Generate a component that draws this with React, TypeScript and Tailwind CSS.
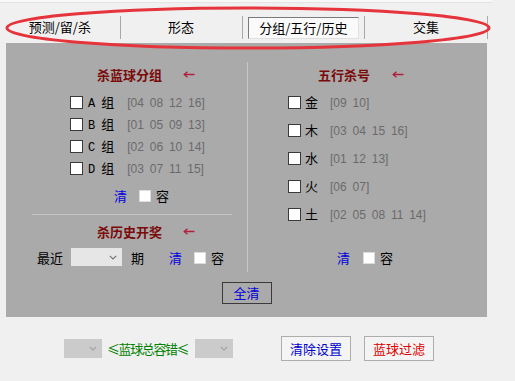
import React from 'react';

const CJK = { fontFamily: '"Noto Sans CJK SC", "Noto Sans", sans-serif' };
const MONO = { fontFamily: '"Liberation Mono", "Noto Sans CJK SC", monospace' };
const NUM = { fontFamily: '"Liberation Sans", Arial, sans-serif', wordSpacing: '2.5px' };

function Arrow() {
    return (
        <svg width="12" height="7" viewBox="0 0 12 7" className="shrink-0">
            <path d="M1.5 3.5 H11.5" stroke="#b0203a" strokeWidth="1.5" fill="none" />
            <path d="M4.5 0.8 L1.2 3.5 L4.5 6.2" stroke="#b0203a" strokeWidth="1.3" fill="none" />
        </svg>
    );
}

function Chevron({ color = '#707070' }: { color?: string }) {
    return (
        <svg width="8" height="5" viewBox="0 0 8 5">
            <path d="M0.8 0.8 L4 4 L7.2 0.8" stroke={color} strokeWidth="1.1" fill="none" />
        </svg>
    );
}

// dark-bordered checkbox used in group rows
function Box() {
    return <span className="inline-block w-[13px] h-[13px] bg-white border border-[#3a3a3a] shrink-0" />;
}

// plain one next to 容
function SmallBox() {
    return <span className="inline-block w-[12px] h-[12px] bg-white border border-[#dcdcdc] shrink-0" />;
}

function Title({ text, pl, gap }: { text: string; pl: number; gap: number }) {
    return (
        <div className="flex items-center h-[16px]" style={{ paddingLeft: pl }}>
            <span className="text-[13px] font-bold text-[#7a0a0a] leading-none" style={CJK}>{text}</span>
            <span style={{ marginLeft: gap }}><Arrow /></span>
        </div>
    );
}

const groups = [
    { k: 'A', n: '[04 08 12 16]' },
    { k: 'B', n: '[01 05 09 13]' },
    { k: 'C', n: '[02 06 10 14]' },
    { k: 'D', n: '[03 07 11 15]' },
];

const wuxing = [
    { k: '金', n: '[09 10]' },
    { k: '木', n: '[03 04 15 16]' },
    { k: '水', n: '[01 12 13]' },
    { k: '火', n: '[06 07]' },
    { k: '土', n: '[02 05 08 11 14]' },
];

const tabs = ['预测/留/杀', '形态', '分组/五行/历史', '交集'];

export default function App() {
    return (
        <div className="relative w-[515px] h-[381px] bg-[#f0f0f0] overflow-hidden text-black" style={CJK}>
            <div className="w-[492px] h-[3px] bg-[#f8f8f8] border-b border-[#e4e4e4]" />

            {/* Tabs */}
            <div className="flex items-center h-[24px] mt-[12px] w-[488px]">
                {tabs.map((t, i) => (
                    <React.Fragment key={t}>
                        <div className={`flex items-center justify-center h-[24px] ${i === 0 ? 'w-[120px]' : i === 1 ? 'w-[121px]' : 'w-[122px]'}`}>
                            {i === 2 ? (
                                <div className="flex items-center justify-center w-[111px] h-[22px] mt-[1px] bg-[#fafafa] border-t border-l border-[#7a7a7a] border-b border-r border-b-[#e0e0e0] border-r-[#e0e0e0] text-[13px]">
                                    {t}
                                </div>
                            ) : (
                                <span className="text-[13px]">{t}</span>
                            )}
                        </div>
                        <div className="w-px h-[23px] bg-[#a8a8a8]" />
                    </React.Fragment>
                ))}
            </div>

            {/* Main panel */}
            <div className="ml-[6px] mt-[4px] w-[481px] h-[274px] bg-[#aaaaaa] flex flex-col">
                <div className="flex h-[229px]">
                    {/* Left column */}
                    <div className="w-[241px] flex flex-col pt-[23px]">
                        <Title text="杀蓝球分组" pl={91} gap={21} />
                        <div className="mt-[9px] flex flex-col">
                            {groups.map((g) => (
                                <div key={g.k} className="flex items-center h-[22px] pl-[64px]">
                                    <Box />
                                    <span className="flex items-baseline">
                                        <span className="ml-[5px] text-[12px]" style={MONO}>{g.k}</span>
                                        <span className="ml-[6px] text-[13px]">组</span>
                                        <span className="ml-[13px] text-[12px] text-[#6a6a6a]" style={NUM}>{g.n}</span>
                                    </span>
                                </div>
                            ))}
                        </div>
                        <div className="flex items-center h-[20px] mt-[6px] pl-[108px]">
                            <span className="text-[13px] text-[#0000dd] leading-none">清</span>
                            <span className="ml-[12px]"><SmallBox /></span>
                            <span className="ml-[5px] text-[13px] leading-none">容</span>
                        </div>
                        <div className="mt-[9px] ml-[26px] w-[200px] h-px bg-[#c4c4c4]" />
                        <div className="mt-[8px]">
                            <Title text="杀历史开奖" pl={91} gap={21} />
                        </div>
                        <div className="flex items-center h-[20px] mt-[8px] pl-[31px]">
                            <span className="text-[13px] leading-none">最近</span>
                            <div className="ml-[8px] w-[51px] h-[18px] bg-[#e6e6e6] flex items-center justify-end pr-[5px]">
                                <Chevron />
                            </div>
                            <span className="ml-[9px] text-[13px] leading-none">期</span>
                            <span className="ml-[25px] text-[13px] text-[#0000dd] leading-none">清</span>
                            <span className="ml-[12px]"><SmallBox /></span>
                            <span className="ml-[5px] text-[13px] leading-none">容</span>
                        </div>
                    </div>

                    {/* Divider */}
                    <div className="w-px bg-[#c8c8c8] mt-[19px]" />

                    {/* Right column */}
                    <div className="flex-1 flex flex-col pt-[23px]">
                        <Title text="五行杀号" pl={70} gap={22} />
                        <div className="mt-[6px] flex flex-col">
                            {wuxing.map((w) => (
                                <div key={w.k} className="flex items-center h-[28px] pl-[40px]">
                                    <Box />
                                    <span className="flex items-baseline">
                                        <span className="ml-[4px] text-[13px]">{w.k}</span>
                                        <span className="ml-[12px] text-[12px] text-[#6a6a6a]" style={NUM}>{w.n}</span>
                                    </span>
                                </div>
                            ))}
                        </div>
                        <div className="flex items-center h-[20px] mt-[19px] pl-[89px]">
                            <span className="text-[13px] text-[#0000dd] leading-none">清</span>
                            <span className="ml-[13px]"><SmallBox /></span>
                            <span className="ml-[5px] text-[13px] leading-none">容</span>
                        </div>
                    </div>
                </div>

                <div className="flex justify-center mt-[10px]">
                    <div className="w-[50px] h-[22px] border border-[#3a3a3a] flex items-center justify-center text-[13px] text-[#0000dd]">
                        全清
                    </div>
                </div>
            </div>

            {/* Bottom controls */}
            <div className="flex items-center h-[25px] mt-[19px] pl-[64px]">
                <div className="w-[38px] h-[19px] bg-[#cbcbcb] flex items-center justify-end pr-[5px]">
                    <Chevron color="#a0a0a0" />
                </div>
                <span className="ml-[5px] w-[83px] whitespace-nowrap text-[13px] tracking-[-1.4px] text-[#008000] leading-none">≤蓝球总容错≤</span>
                <div className="ml-[5px] w-[38px] h-[19px] bg-[#cbcbcb] flex items-center justify-end pr-[5px]">
                    <Chevron color="#a0a0a0" />
                </div>
                <div className="ml-[48px] w-[70px] h-[25px] border border-[#adadad] bg-[#f4f4f4] flex items-center justify-center text-[13px] text-[#0000cc]">
                    清除设置
                </div>
                <div className="ml-[13px] w-[70px] h-[25px] border border-[#adadad] bg-[#f4f4f4] flex items-center justify-center text-[13px] text-[#dd0000]">
                    蓝球过滤
                </div>
            </div>

            {/* Red annotation ellipse */}
            <svg className="absolute left-0 top-0 pointer-events-none" width="515" height="60">
                <ellipse cx="248" cy="28" rx="241" ry="20" fill="none" stroke="#e5343b" strokeWidth="3" />
            </svg>
        </div>
    );
}
